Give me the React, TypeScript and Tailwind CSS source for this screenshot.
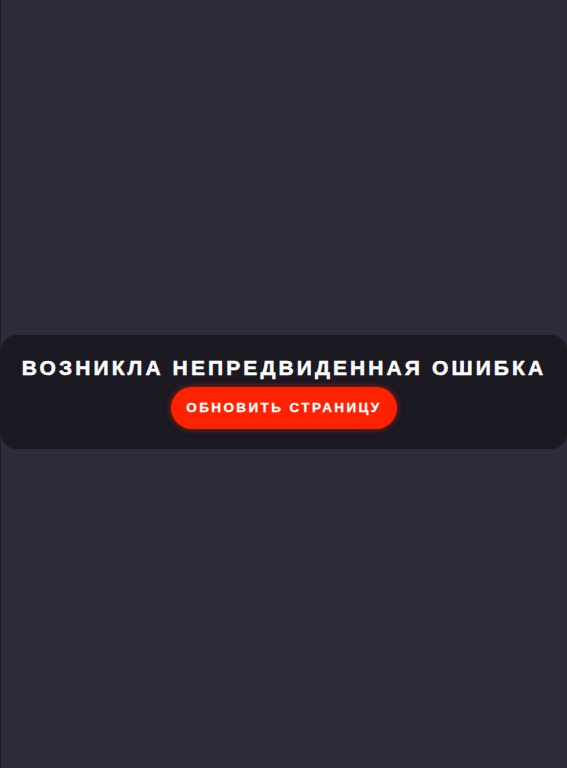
export default function App() {
  return (
    <div className="min-h-[768px] w-full bg-[#2d2a3b] border-l border-[#1f1d29] flex items-center justify-center pt-[16px]" style={{ fontFamily: '"Liberation Sans", Arial, sans-serif' }}>
      <div className="w-full rounded-2xl bg-[#1b1922] flex flex-col items-center pt-[21px] pb-[20px] gap-[7px]">
        <h1 className="text-white font-bold text-[21px] leading-[24px] tracking-[3.1px] uppercase [-webkit-text-stroke:0.5px_white]">
          Возникла непредвиденная ошибка
        </h1>
        <button className="h-[42px] px-[15px] rounded-full bg-[#ff2200] shadow-[0_0_6px_rgba(255,40,0,0.6)] text-white font-bold text-[13.5px] tracking-[2.4px] uppercase [-webkit-text-stroke:0.3px_white]">
          Обновить страницу
        </button>
      </div>
    </div>
  );
}
